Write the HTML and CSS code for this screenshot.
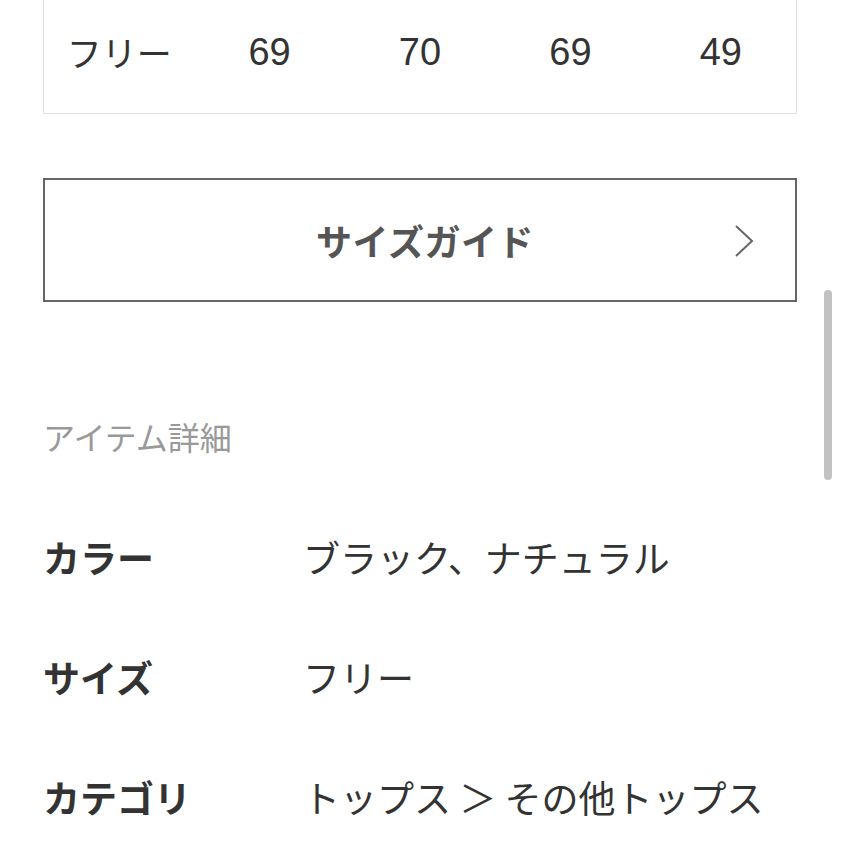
FILE: index.html
```html
<!DOCTYPE html>
<html lang="ja">
<head>
<meta charset="utf-8">
<link rel="stylesheet" href="styles.css">
</head>
<body>
<div class="page">
  <div class="size-table">
    <div class="cell">フリー</div>
    <div class="cell num">69</div>
    <div class="cell num">70</div>
    <div class="cell num">69</div>
    <div class="cell num">49</div>
  </div>

  <a class="guide-btn" href="#">
    <span class="guide-label">サイズガイド</span>
    <svg class="chev" width="22" height="34" viewBox="0 0 22 34"><path d="M3 2 L19 17 L3 32" fill="none" stroke="#666" stroke-width="2"/></svg>
  </a>

  <h2 class="details-title">アイテム詳細</h2>

  <dl class="details">
    <div class="row"><dt>カラー</dt><dd>ブラック、ナチュラル</dd></div>
    <div class="row"><dt>サイズ</dt><dd>フリー</dd></div>
    <div class="row"><dt>カテゴリ</dt><dd>トップス ＞ その他トップス</dd></div>
  </dl>
</div>
<div class="scrollbar"></div>
</body>
</html>
```

FILE: styles.css
```css
html, body {
  margin: 0;
  padding: 0;
  background: #fff;
  overflow: hidden;
}
body {
  font-family: "Noto Sans CJK JP", "Noto Sans", sans-serif;
  color: #333;
  width: 842px;
  height: 842px;
  position: relative;
}
.page {
  padding: 0 45px 0 43px;
}
.size-table {
  display: grid;
  grid-template-columns: repeat(5, 1fr);
  border: 1px solid #e2e2e2;
  border-top: none;
  padding: 22px 0 31px;
}
.cell {
  text-align: center;
  font-size: 35px;
  line-height: 60px;
  color: #333;
}
.cell.num {
  font-family: "Liberation Sans", Arial, sans-serif;
  font-size: 38px;
}
.guide-btn {
  margin-top: 64px;
  height: 120px;
  border: 2px solid #666;
  display: flex;
  align-items: center;
  justify-content: center;
  position: relative;
  text-decoration: none;
}
.guide-label {
  font-size: 36px;
  font-weight: bold;
  color: #555;
  letter-spacing: 0.5px;
  margin-left: 10px;
}
.chev {
  position: absolute;
  right: 40px;
  top: 44px;
}
.details-title {
  margin: 114px 0 0 0;
  font-size: 32px;
  font-weight: normal;
  line-height: 40px;
  color: #999;
}
.details {
  margin: 41px 0 0 0;
}
.row {
  display: flex;
  height: 120px;
  align-items: center;
}
.row dt {
  width: 260px;
  margin-left: 0;
  font-size: 37px;
  font-weight: bold;
  color: #333;
}
.row dd {
  margin: 0;
  font-size: 37px;
  color: #333;
}
.scrollbar {
  position: absolute;
  left: 824px;
  top: 290px;
  width: 8px;
  height: 190px;
  border-radius: 4px;
  background: #c2c2c2;
}
```
